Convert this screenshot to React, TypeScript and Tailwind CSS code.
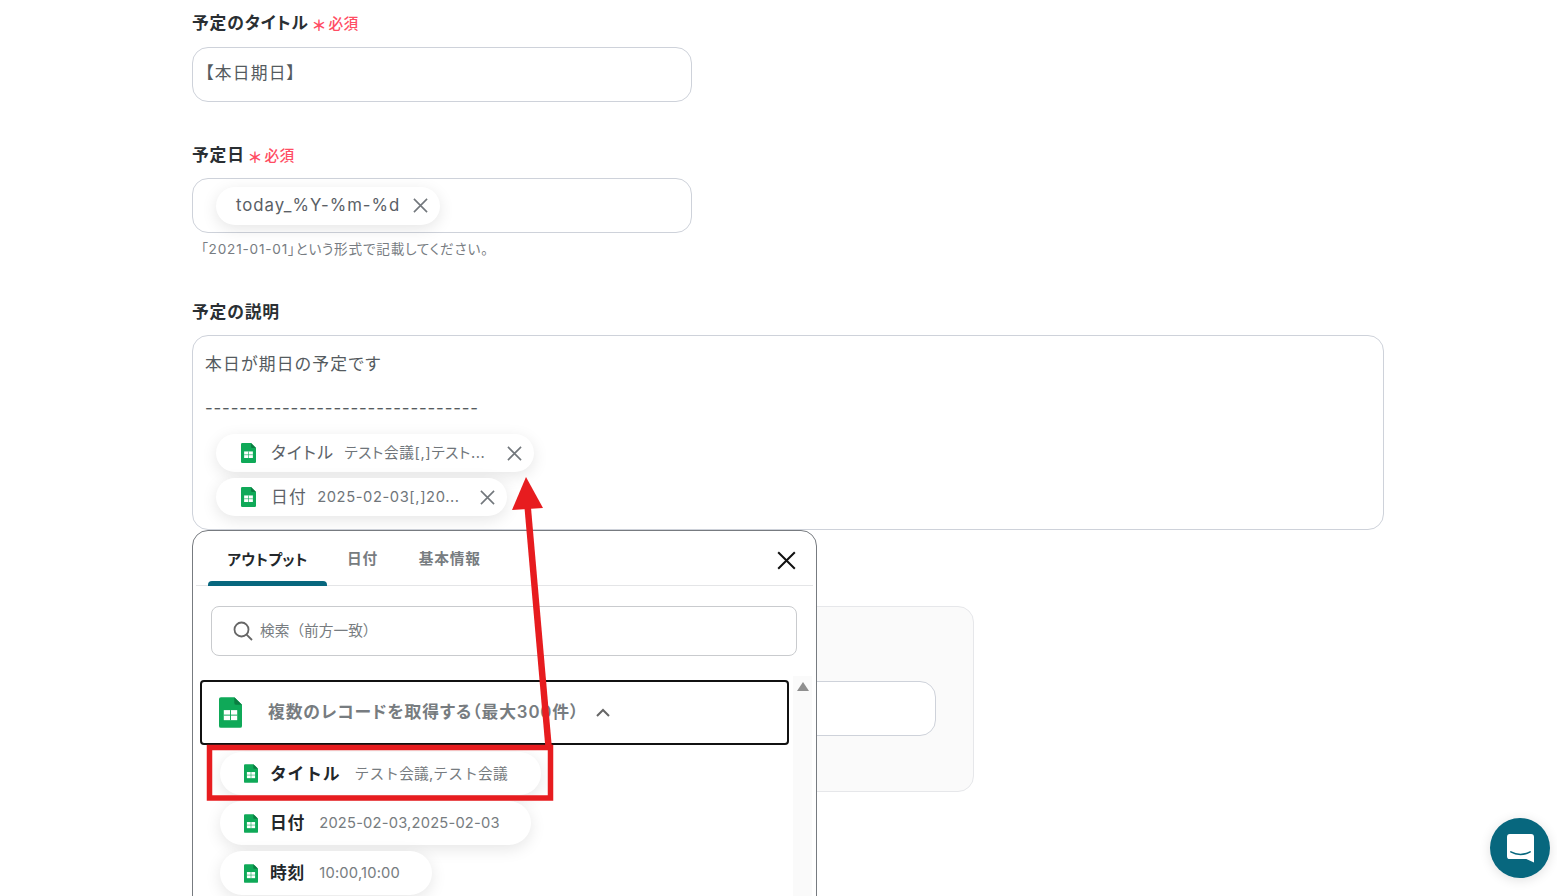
import React from "react";

const font = { fontFamily: '"Inter","Noto Sans CJK JP","Noto Sans",sans-serif' };

function Sheets({ className }: { className: string }) {
  return (
    <svg viewBox="0 0 24 32" className={className}>
      <path d="M2 0H16L24 8V30A2 2 0 0 1 22 32H2A2 2 0 0 1 0 30V2A2 2 0 0 1 2 0Z" fill="#0FA958" />
      <path d="M16 0L24 8H18A2 2 0 0 1 16 6Z" fill="#0A7D41" />
      <path d="M5 13.5H19V24H5Z" fill="#fff" />
      <path d="M5 18.75H19M12 13.5V24" stroke="#0FA958" strokeWidth="1" />
    </svg>
  );
}

function Close({ className }: { className: string }) {
  return (
    <svg viewBox="0 0 16 16" className={className} fill="none" stroke="currentColor" strokeWidth="1.7">
      <path d="M1 1L15 15M15 1L1 15" />
    </svg>
  );
}

function Label({ text, required }: { text: string; required?: boolean }) {
  return (
    <div className="flex items-center h-6 text-[16.8px] tracking-[0.05em] font-semibold text-[#2a2f33]">
      <span>{text}</span>
      {required && (
        <span className="ml-[4px] flex items-center text-[14.7px] tracking-[0.02em] font-medium text-[#ff4d63]">
          <span className="text-[15px] font-bold leading-none mr-[3px] mt-[3px]">＊</span>必須
        </span>
      )}
    </div>
  );
}

function InputChip({ label, value, w }: { label: string; value: string; w: string }) {
  return (
    <div className={`flex items-center h-[38px] rounded-full bg-white shadow-[0_4px_16px_rgba(0,0,0,0.1)] ${w}`}>
      <Sheets className="w-[15px] h-5 ml-[25px] shrink-0" />
      <span className="ml-[15px] pt-[2px] text-[16.8px] tracking-[1.3px] text-[#5c6268] whitespace-nowrap">{label}</span>
      <span className="ml-[10px] text-[14.7px] tracking-[0.6px] text-[#6f757a] whitespace-nowrap flex-1">{value}</span>
      <Close className="w-[15px] h-[15px] mr-[12px] text-[#72777c] shrink-0" />
    </div>
  );
}

function OutputChip({ label, value, w, h }: { label: string; value: string; w: string; h: string }) {
  return (
    <div className={`flex items-center rounded-full bg-white shadow-[0_4px_16px_rgba(0,0,0,0.1)] [font-feature-settings:normal] ${w} ${h}`}>
      <Sheets className="w-[14px] h-[19px] ml-[24px] shrink-0" />
      <span className="ml-[12px] pt-[2px] text-[16.8px] tracking-[0.05em] font-bold text-[#23272b] whitespace-nowrap">{label}</span>
      <span className="ml-[14px] pt-[1px] text-[14.7px] tracking-[0.2px] text-[#777c80] whitespace-nowrap">{value}</span>
    </div>
  );
}

export default function App() {
  return (
    <div style={font} className="relative h-[896px] overflow-hidden bg-white [font-feature-settings:'palt']">
      <div className="pl-[192px] pt-[12px]">
        <Label text="予定のタイトル" required />
        <div className="mt-[11px] w-[500px] h-[55px] rounded-2xl border border-[#ced2da] flex items-center pl-[12px] pb-[1px] text-[16.8px] tracking-[1.25px] text-[#555b60]">
          【本日期日】
        </div>

        <div className="mt-[42px]">
          <Label text="予定日" required />
        </div>
        <div className="mt-[10px] w-[500px] h-[55px] rounded-2xl border border-[#ced2da] flex items-center pl-[23px]">
          <div className="flex items-center h-[38px] w-[224px] rounded-full bg-white shadow-[0_4px_16px_rgba(0,0,0,0.1)]">
            <span className="ml-5 text-[16.8px] tracking-[0.98px] text-[#5a6066] whitespace-nowrap flex-1">today_%Y-%m-%d</span>
            <Close className="w-[15px] h-[15px] mr-3 text-[#72777c]" />
          </div>
        </div>
        <div className="mt-[6px] h-5 text-[13.6px] tracking-[0.8px] leading-5 text-[#777c82] pl-[9px]">「2021-01-01」という形式で記載してください。</div>

        <div className="mt-[42px]">
          <Label text="予定の説明" />
        </div>
        <div className="mt-[10px] w-[1192px] h-[195px] rounded-2xl border border-[#ced2da] pl-[12px] pt-[16px] text-[16.8px] tracking-[0.05em] text-[#555b60]">
          <div className="h-6 leading-6 tracking-[1.25px]">本日が期日の予定です</div>
          <div className="mt-[20px] h-6 leading-6 whitespace-nowrap">--------------------------------</div>
          <div className="mt-[14px] ml-[11px] flex flex-col gap-[6px]">
            <InputChip label="タイトル" value="テスト会議[,]テスト..." w="w-[318px]" />
            <InputChip label="日付" value="2025-02-03[,]20..." w="w-[291px]" />
          </div>
        </div>

        <div className="mt-[76px] w-[782px] h-[186px] rounded-2xl border border-[#e6e7ea] bg-[#fafafa] pl-[100px] pt-[74px]">
          <div className="w-[643px] h-[55px] rounded-2xl border border-[#ced2da] bg-white" />
        </div>
      </div>

      {/* Output picker popover */}
      <div className="absolute left-[192px] top-[530px] w-[625px] h-[400px] rounded-t-2xl border border-[#777b80] bg-white">
        <div className="mx-[3px] h-[55px] border-b border-[#e4e5e7] flex relative">
          <div className="ml-3 w-[119px] h-[55px] flex items-center justify-center pt-[3px] text-[14.7px] tracking-[0.4px] font-bold text-[#23272b] relative">
            アウトプット
            <span className="absolute left-0 right-0 bottom-0 h-[5px] rounded-t-[4px] bg-[#07677e]" />
          </div>
          <div className="ml-[20px] flex items-center pt-[3px] text-[14.7px] tracking-[0.05em] font-semibold text-[#777c80]">日付</div>
          <div className="ml-[41px] flex items-center pt-[3px] text-[14.7px] tracking-[0.05em] font-semibold text-[#777c80]">基本情報</div>
          <Close className="absolute left-[581px] top-[20px] w-[19px] h-[19px] text-[#111]" />
        </div>
        <div className="mt-5 ml-[18px] w-[586px] h-[50px] rounded-lg border border-[#c9cbce] flex items-center pl-[21px] text-[14.7px] text-[#777c80] [font-feature-settings:normal]">
          <svg viewBox="0 0 20 20" className="w-5 h-5 text-[#666]" fill="none" stroke="currentColor" strokeWidth="1.8">
            <circle cx="8.5" cy="8.5" r="7" />
            <path d="M13.6 13.6L19 19" />
          </svg>
          <span className="ml-[7px]">検索（前方一致）</span>
        </div>
        <div className="relative mt-5 ml-[600px] w-[19px] h-[300px] bg-[#fafafa] flex justify-center pt-[6px]">
          <span className="w-0 h-0 border-x-[6px] border-x-transparent border-b-[9px] border-b-[#8f8f8f]" />
        </div>
        <div className="absolute left-[7px] top-[149px] w-[589px] h-[65px] rounded border-2 border-[#111] bg-white flex items-center pl-[17px]">
          <Sheets className="w-[23px] h-[31px]" />
          <span className="ml-[26px] text-[16.8px] tracking-[0.9px] font-semibold text-[#777c80] whitespace-nowrap">複数のレコードを取得する（最大300件）</span>
          <svg viewBox="0 0 14 9" className="ml-[17px] w-[14px] h-[9px] text-[#666]" fill="none" stroke="currentColor" strokeWidth="2">
            <path d="M1 8L7 2L13 8" />
          </svg>
        </div>
        <div className="absolute left-[27px] top-[221px] flex flex-col">
          <OutputChip label="タイトル" value="テスト会議,テスト会議" w="w-[321px]" h="h-[43px]" />
          <div className="h-[6px]" />
          <OutputChip label="日付" value="2025-02-03,2025-02-03" w="w-[311px]" h="h-[44px]" />
          <div className="h-[6px]" />
          <OutputChip label="時刻" value="10:00,10:00" w="w-[212px]" h="h-[44px]" />
        </div>
      </div>

      {/* Red annotation */}
      <svg className="absolute left-0 top-0 pointer-events-none" width="1557" height="896">
        <rect x="209.5" y="747.5" width="341" height="50.5" fill="none" stroke="#e71c1f" strokeWidth="5.5" />
        <path d="M548.5 746L527.5 505" stroke="#e71c1f" strokeWidth="6.5" fill="none" />
        <path d="M526 477L543 508L512 510Z" fill="#e71c1f" />
      </svg>

      {/* Chat launcher */}
      <div className="absolute left-[1490px] top-[818px] w-[60px] h-[60px] rounded-full bg-[#07677e] shadow-[0_2px_12px_rgba(0,0,0,0.12)] flex items-center justify-center">
        <svg viewBox="0 0 28 30" className="w-[27px] h-[29px]">
          <path d="M3 0H25A3 3 0 0 1 28 3V29.5L20 26H3A3 3 0 0 1 0 23V3A3 3 0 0 1 3 0Z" fill="#fff" />
          <path d="M4 18.5C10 22 18 22 24 18.5" stroke="#07677e" strokeWidth="1.6" fill="none" strokeLinecap="round" />
        </svg>
      </div>
    </div>
  );
}
